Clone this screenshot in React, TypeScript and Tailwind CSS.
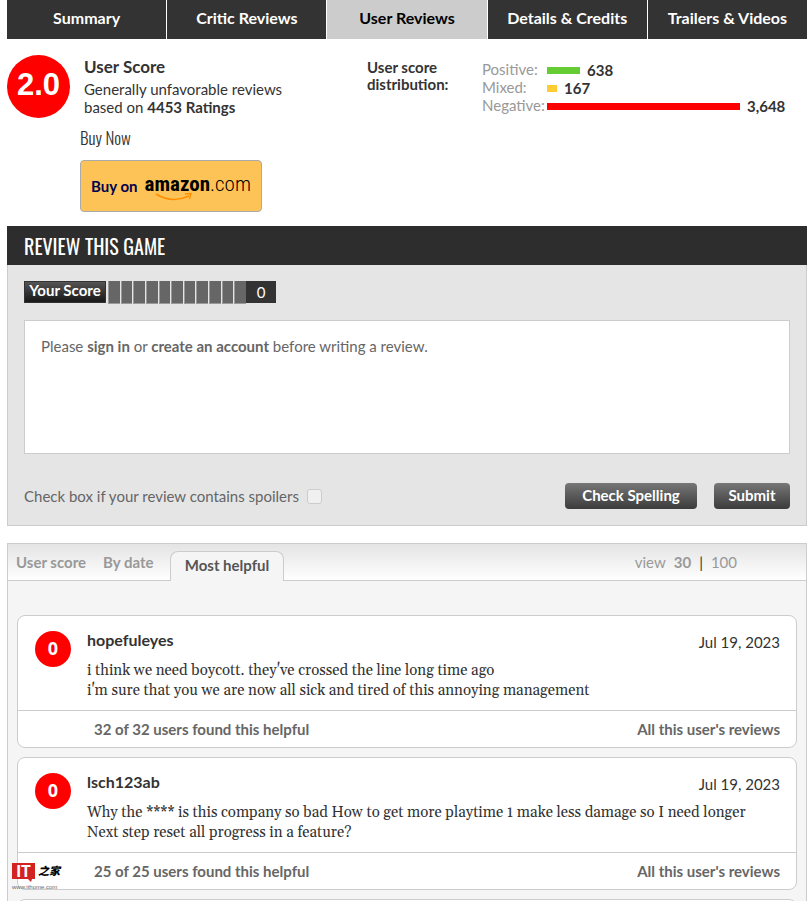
import React, { useState } from "react";

const tabs = ["Summary", "Critic Reviews", "User Reviews", "Details & Credits", "Trailers & Videos"];

const distribution = [
  { label: "Positive:", count: "638", color: "bg-[#66cc33]", width: 33 },
  { label: "Mixed:", count: "167", color: "bg-[#ffcc33]", width: 10 },
  { label: "Negative:", count: "3,648", color: "bg-[#ff0000]", width: 193 },
];

const reviews = [
  {
    user: "hopefuleyes",
    date: "Jul 19, 2023",
    lines: [
      "i think we need boycott. they've crossed the line long time ago",
      "i'm sure that you we are now all sick and tired of this annoying management",
    ],
    helpful: "32 of 32 users found this helpful",
  },
  {
    user: "lsch123ab",
    date: "Jul 19, 2023",
    lines: [
      "Why the **** is this company so bad How to get more playtime 1 make less damage so I need longer",
      "Next step reset all progress in a feature?",
    ],
    helpful: "25 of 25 users found this helpful",
  },
];

function Review({ review }: { review: (typeof reviews)[number] }) {
  return (
    <article className="bg-white border border-[#ccc] rounded-lg">
      <div className="flex pl-[17px] pr-4 pt-[14px] pb-[9px]">
        <div className="w-9 h-9 mt-px pb-0.5 rounded-full bg-[#ff0000] text-white text-lg font-bold font-['Open_Sans',sans-serif] flex items-center justify-center shrink-0">
          0
        </div>
        <div className="flex-1 min-w-0 ml-4">
          <div className="flex justify-between leading-5">
            <a href="#" className="text-base leading-5 font-bold text-[#333]">{review.user}</a>
            <span className="pt-0.5">{review.date}</span>
          </div>
          <div className="font-['Gelasio','Liberation_Serif',serif] text-[15px] leading-5 mt-[9px]">
            {review.lines.map((line) => (
              <p key={line}>{line}</p>
            ))}
          </div>
        </div>
      </div>
      <div className="border-t border-[#ccc] h-[37px] flex items-center justify-between pl-[76px] pr-4 font-bold text-[#666]">
        <span>{review.helpful}</span>
        <a href="#">All this user's reviews</a>
      </div>
    </article>
  );
}

export default function App() {
  const [spoilers, setSpoilers] = useState(false);

  return (
    <main className="relative h-screen overflow-hidden bg-white pl-[7px] pr-[2px] font-['Lato',sans-serif] text-[15px] text-[#333]">
      {/* Section tabs */}
      <nav className="grid grid-cols-5 gap-px">
        {tabs.map((tab) => (
          <a
            key={tab}
            href="#"
            className={`h-[39px] pb-[3px] flex items-center justify-center text-base font-bold whitespace-nowrap ${
              tab === "User Reviews" ? "bg-[#ccc] text-black" : "bg-[#333] text-white"
            }`}
          >
            {tab}
          </a>
        ))}
      </nav>

      {/* Score summary */}
      <section className="flex pt-4">
        <div className="w-[63px] h-[63px] pb-0.5 rounded-full bg-[#ff0000] text-white text-[31px] font-bold font-['Liberation_Sans',sans-serif] flex items-center justify-center shrink-0">
          2.0
        </div>
        <div className="w-[283px] ml-[14px] pt-0.5">
          <h2 className="text-[17px] leading-5 font-bold">User Score</h2>
          <p className="leading-[18px] mt-[3px]">
            Generally unfavorable reviews
            <br />
            based on <b>4453 Ratings</b>
          </p>
        </div>
        <div className="flex pt-1">
          <h3 className="w-[115px] leading-[17px] font-bold">
            User score
            <br />
            distribution:
          </h3>
          <ul className="pt-0.5">
            {distribution.map((row) => (
              <li key={row.label} className="flex items-center h-[18px]">
                <span className="w-[65px] pb-px text-[#999]">{row.label}</span>
                <span className={`h-[7px] ${row.color}`} style={{ width: row.width }} />
                <b className="ml-[7px]">{row.count}</b>
              </li>
            ))}
          </ul>
        </div>
      </section>

      <section className="pl-[73px] pt-2">
        <h3 className="font-['Oswald','Roboto_Condensed',sans-serif] font-light text-[17px] leading-6">Buy Now</h3>
        <a
          href="#"
          className="mt-[10px] w-[182px] h-[52px] rounded bg-[#fec357] border border-[#aaa] flex items-center justify-center gap-[7px]"
        >
          <span className="text-[15px] font-bold text-[#000050]">Buy on</span>
          <span className="relative pb-1 font-['Roboto_Condensed','Liberation_Sans',sans-serif] text-[21px] leading-none text-black">
            <b>amazon</b><span className="font-light">.com</span>
            <svg className="absolute left-[10px] top-[18px]" width="38" height="10" viewBox="0 0 38 10" fill="none" stroke="#ff8f00">
              <path d="M1 2 Q17 12 34 4" strokeWidth="1.6" />
              <path d="M30 2 L36 1.5 L34.5 7" strokeWidth="1.3" />
            </svg>
          </span>
        </a>
      </section>

      {/* Review form */}
      <section className="mt-[14px]">
        <h2 className="h-[39px] bg-[#2d2d2d] text-white font-['Oswald','Roboto_Condensed',sans-serif] text-xl pl-[17px] flex items-center">
          REVIEW THIS GAME
        </h2>
        <form className="bg-[#e5e5e5] border border-t-0 border-[#ccc] px-4 pt-4 pb-4" onSubmit={(e) => e.preventDefault()}>
          <div className="flex text-white">
            <span className="h-[22px] w-[82px] pb-[3px] flex justify-center items-center leading-none whitespace-nowrap font-bold border border-[#333] bg-linear-to-b from-[#555] to-[#181818]">
              Your Score
            </span>
            <div className="ml-0.5 w-[138px] h-[23px] flex gap-px">
              {Array.from({ length: 11 }, (_, i) => (
                <button key={i} type="button" aria-label={`Score ${i}`} className="flex-1 bg-[#666] border-l border-b border-[#999]" />
              ))}
            </div>
            <span className="w-[30px] h-[22px] bg-[#333] flex items-center justify-center">0</span>
          </div>
          <div className="mt-4 h-[134px] bg-white border border-[#ccc] px-4 py-[15px] text-[#666] leading-5">
            Please <a href="#" className="font-bold">sign in</a> or <a href="#" className="font-bold">create an account</a> before
            writing a review.
          </div>
          <div className="mt-[29px] flex items-center justify-between">
            <label className="flex items-center gap-2 text-[#666]">
              Check box if your review contains spoilers
              <input
                type="checkbox"
                checked={spoilers}
                onChange={(e) => setSpoilers(e.target.checked)}
                className="appearance-none w-[15px] h-[15px] rounded-[3px] border border-[#ccc] bg-[#f0f0f0] checked:bg-[#666]"
              />
            </label>
            <div className="flex gap-[17px] text-white font-bold">
              <button type="button" className="w-[132px] h-[26px] pb-0.5 rounded bg-linear-to-b from-[#777] to-[#3c3c3c]">
                Check Spelling
              </button>
              <button type="submit" className="w-[76px] h-[26px] pb-0.5 rounded bg-linear-to-b from-[#777] to-[#3c3c3c]">
                Submit
              </button>
            </div>
          </div>
        </form>
      </section>

      {/* Review list */}
      <section className="mt-[17px] border border-[#ccc] bg-[#f5f5f5]">
        <div className="h-[37px] flex items-end border-b border-[#ccc] bg-linear-to-b from-[#e4e4e4] to-white text-[#999]">
          <div className="flex gap-[15px] pl-2 pb-[7px] font-bold">
            <a href="#" className="w-[72px] whitespace-nowrap">User score</a>
            <a href="#" className="w-[52px] whitespace-nowrap">By date</a>
          </div>
          <a
            href="#"
            className="ml-[15px] -mb-px w-[114px] h-[30px] pb-0.5 rounded-t-lg border border-b-0 border-[#ccc] bg-[#f5f5f5] text-[#555] font-bold flex items-center justify-center"
          >
            Most helpful
          </a>
          <div className="ml-auto mr-[69px] pb-[7px] flex gap-2">
            <span>view</span>
            <a href="#" className="font-bold">30</a>
            <span className="text-[#333]">|</span>
            <a href="#">100</a>
          </div>
        </div>
        <div className="px-[9px] pt-[34px] flex flex-col gap-[9px]">
          {reviews.map((review) => (
            <Review key={review.user} review={review} />
          ))}
          <div className="h-5 bg-white border border-[#ccc] rounded-t-lg" />
        </div>
      </section>

      {/* Watermark */}
      <div className="absolute left-3 top-[862px] w-12 whitespace-nowrap">
        <div className="flex gap-[3px] items-center h-[17px]">
          <span className="relative w-6 h-4 bg-[#d22222] text-white text-base leading-4 font-black text-center">
            IT
            <svg className="absolute left-4 top-4" width="5" height="3" viewBox="0 0 5 3" fill="#d22222">
              <path d="M0 0h4l-1 3z" />
            </svg>
          </span>
          <span className="font-['Noto_Sans_CJK_SC',sans-serif] text-[11px] font-black italic text-black">之家</span>
        </div>
        <div className="text-[6px] leading-[9px] mt-1 text-[#666] font-['Liberation_Sans',sans-serif]">www.ithome.com</div>
      </div>
    </main>
  );
}
